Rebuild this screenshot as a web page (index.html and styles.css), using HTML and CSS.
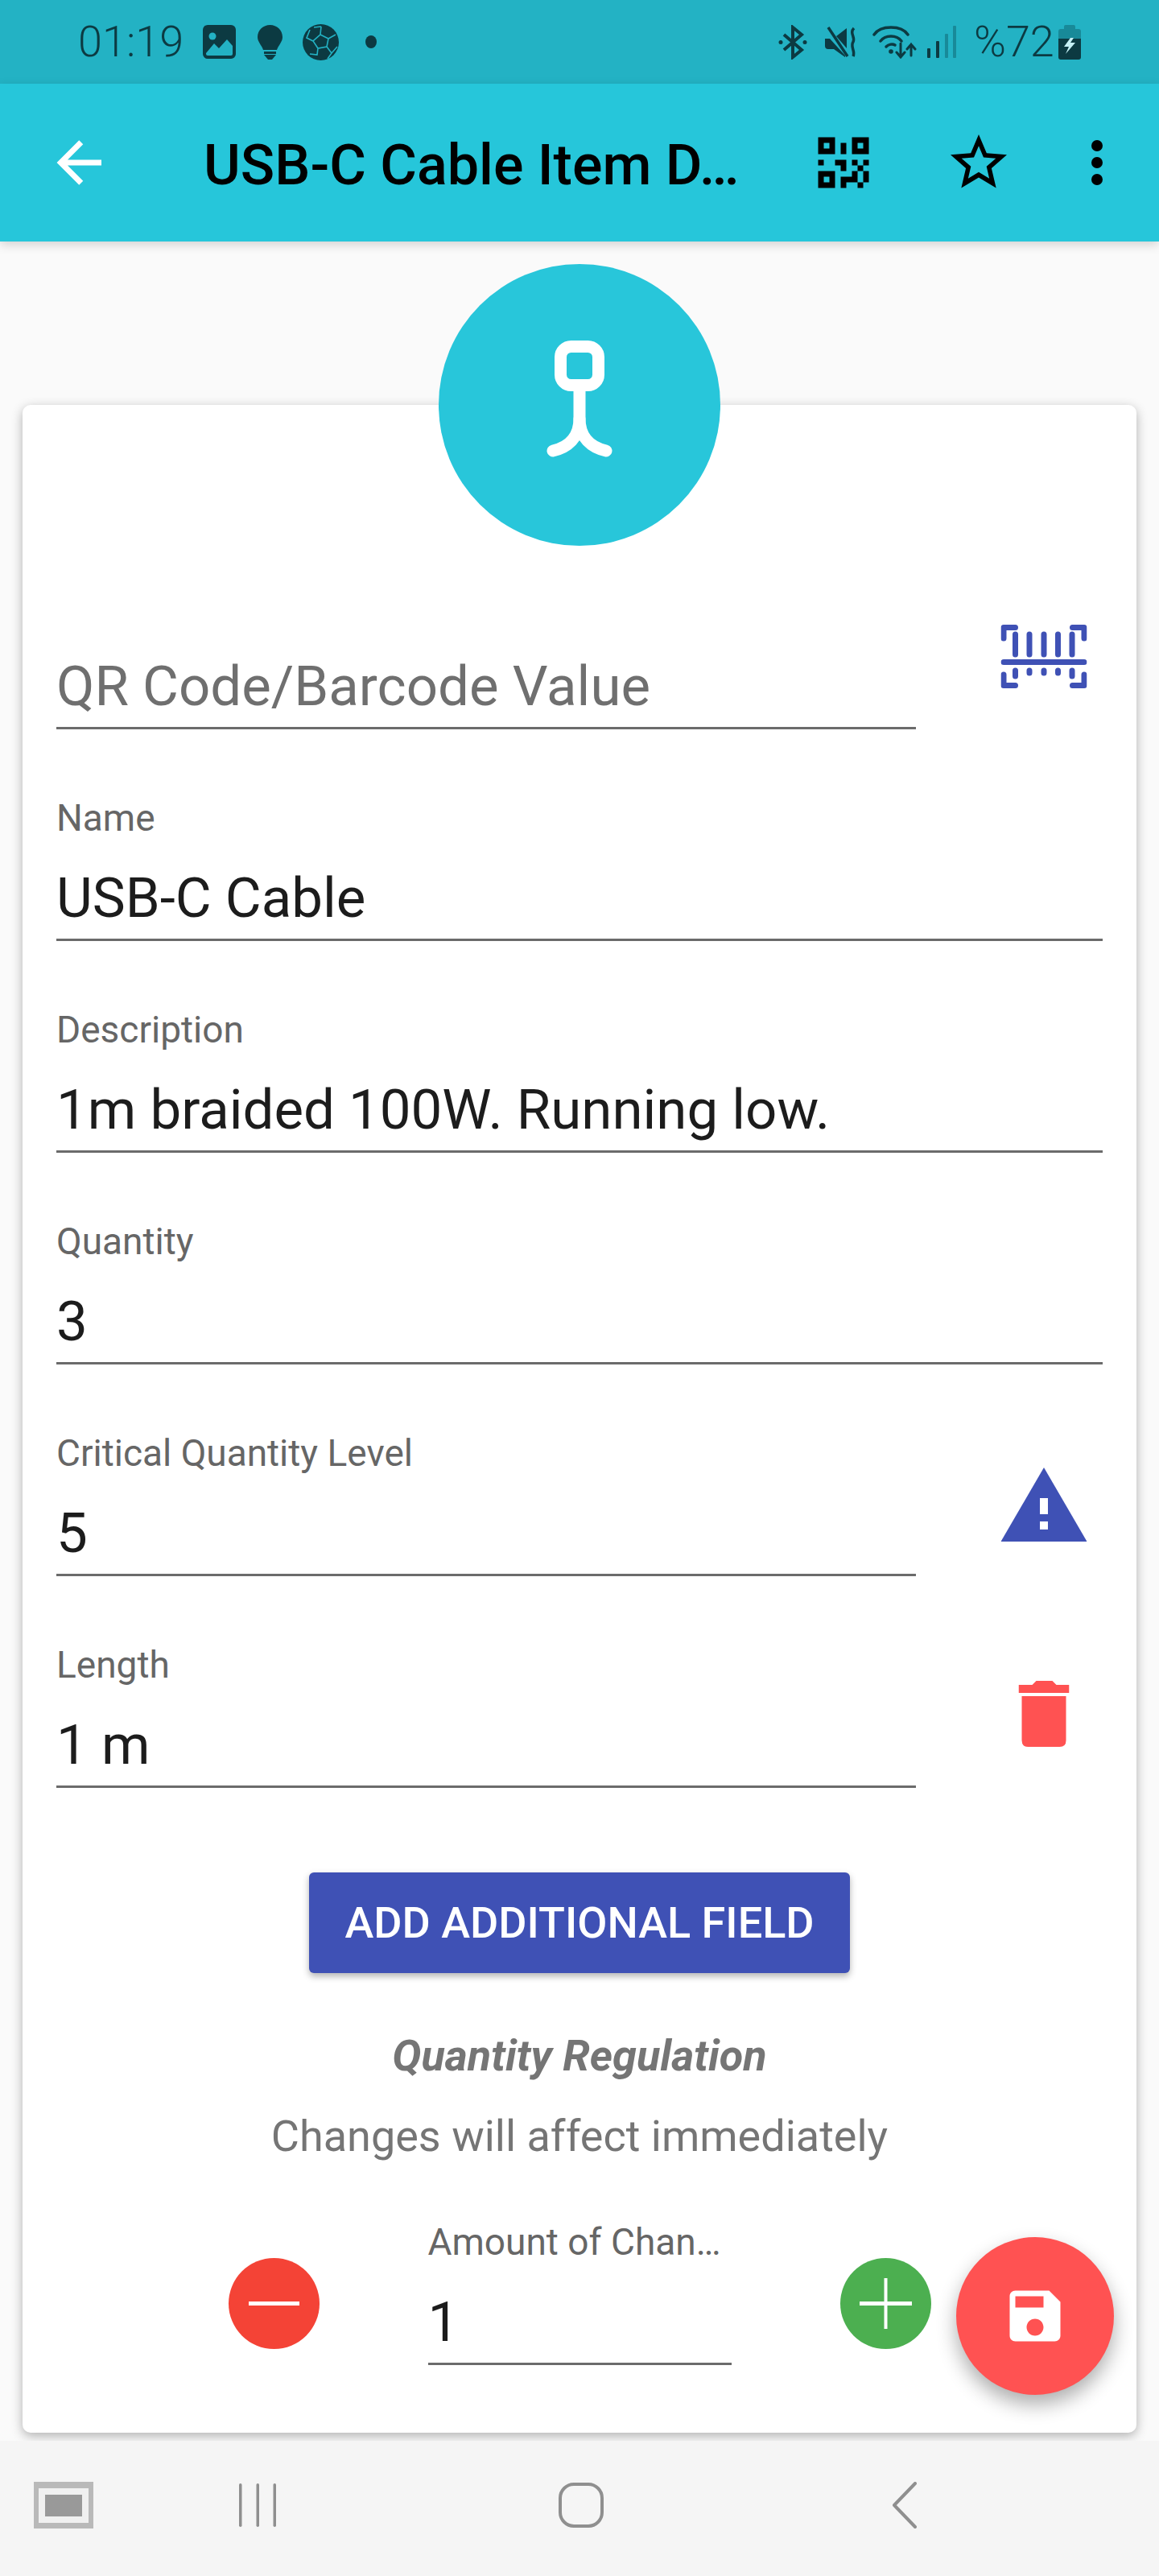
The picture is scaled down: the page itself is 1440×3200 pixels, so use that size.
FILE: index.html
```html
<!DOCTYPE html>
<html lang="en">

<head>
  <meta charset="UTF-8">
  <meta name="viewport" content="width=device-width, initial-scale=1.0">
  <title>USB-C Cable Item Details</title>
  <link rel="stylesheet" href="styles.css">
</head>

<body>

  <div class="status-bar">
    <div class="status-group">
      <span class="status-time">01:19</span>
      <svg class="st-image" width="41" height="42" viewBox="0 0 41 42">
        <rect width="41" height="42" rx="6" fill="#0c3a42" />
        <circle cx="12" cy="14" r="4.5" fill="#23b2c4" />
        <path d="M4 35 L14 23 L20 29 L30 18 L37 26 V36 Q37 38 35 38 H6 Q4 38 4 36Z" fill="#23b2c4" />
      </svg>
      <svg class="st-bulb" width="31" height="43" viewBox="0 0 31 43" fill="#0c3a42">
        <path d="M15.5 0C24 0 31 6.5 31 15C31 21 26 25 24 31H7C5 25 0 21 0 15C0 6.5 7 0 15.5 0Z" />
        <rect x="8" y="33" width="15" height="3" />
        <path d="M8 37H23L18 43H13Z" />
      </svg>
      <svg class="st-ball" width="45" height="45" viewBox="0 0 45 45">
        <circle cx="22.5" cy="22.5" r="22.5" fill="#0c3a42" />
        <path d="M22 13L32 18L30 28L19 30L13 21ZM22 13L23 3M32 18L41 13M30 28L36 36L31 43M19 30L18 38L9 37M13 21L5 17L9 7M23 3L14 4M36 36L43 28" fill="none" stroke="#23b2c4" stroke-width="1.6" />
      </svg>
      <span class="st-dot"></span>
    </div>
    <div class="status-group">
      <svg class="st-bt" width="36" height="43" viewBox="0 0 36 43" fill="none" stroke="#0c3a42" stroke-width="4">
        <path d="M7 12L29 31L18 40V3L29 12L7 31" />
        <circle cx="3" cy="21.5" r="2.5" fill="#0c3a42" stroke="none" />
        <circle cx="33" cy="21.5" r="2.5" fill="#0c3a42" stroke="none" />
      </svg>
      <svg class="st-mute" width="40" height="39" viewBox="0 0 40 39">
        <path d="M0 15H6L25 36V38L11 28H4Q0 28 0 24Z" fill="#0c3a42" />
        <path d="M14 12L27 2V27Z" fill="#0c3a42" />
        <path d="M4 1L28 37" stroke="#0c3a42" stroke-width="3.5" />
        <path d="M36 2C30 8 38 13 35 19C31 25 38 30 35 37" fill="none" stroke="#0c3a42" stroke-width="3.5" />
      </svg>
      <svg class="st-wifi" width="55" height="41" viewBox="0 0 55 41" fill="none" stroke="#0c3a42" stroke-width="3.5" stroke-linecap="round">
        <path d="M2 11C10 -1 36 -1 44 11" />
        <path d="M10 19C16 11 30 11 36 19" />
        <path d="M17 26C20 23 25 22 28 24" />
        <circle cx="23" cy="32" r="2.8" fill="#0c3a42" stroke="none" />
        <path d="M35 22V39M30 33L35 39L40 33" stroke-width="3" />
        <path d="M48 37V23M43 29L48 23L53 29" stroke-width="3" />
      </svg>
      <svg class="st-signal" width="36" height="40" viewBox="0 0 36 40">
        <rect x="0" y="28" width="4" height="12" rx="1" fill="#0c3a42" />
        <rect x="11" y="19" width="4" height="21" rx="1" fill="#0c3a42" />
        <rect x="22" y="10" width="4" height="30" rx="1" fill="#188a99" />
        <rect x="32" y="0" width="4" height="40" rx="1" fill="#188a99" />
      </svg>
      <span class="status-pct">%72</span>
      <svg class="st-batt" width="28" height="43" viewBox="0 0 28 43">
        <path d="M7 2Q7 0 9 0H19Q21 0 21 2V5H25Q28 5 28 8V17H0V8Q0 5 3 5H7Z" fill="#188a99" />
        <path d="M0 17H28V40Q28 43 25 43H3Q0 43 0 40Z" fill="#0c3a42" />
        <path d="M15 16L7 27H13L9 36L21 22H15L19 16Z" fill="#c5f0f5" />
      </svg>
    </div>
  </div>

  <div class="app-bar">
    <svg class="bar-icon back-icon" viewBox="0 0 24 24" fill="#fff">
      <path d="M20,11V13H8L13.5,18.5L12.08,19.92L4.16,12L12.08,4.08L13.5,5.5L8,11H20Z" />
    </svg>
    <div class="app-title">USB-C Cable Item D…</div>
    <svg class="bar-icon" viewBox="0 0 24 24">
      <path d="M3,11H5V13H3V11M11,5H13V9H11V5M9,11H13V15H11V13H9V11M15,11H17V13H19V11H21V13H19V15H21V19H19V21H17V19H13V21H11V17H15V15H17V13H15V11M19,19V15H17V19H19M15,3H21V9H15V3M17,5V7H19V5H17M3,3H9V9H3V3M5,5V7H7V5H5M3,15H9V21H3V15M5,17V19H7V17H5Z" />
    </svg>
    <svg class="bar-icon star-icon" viewBox="0 0 24 24">
      <path d="M12,15.39L8.24,17.66L9.23,13.38L5.91,10.5L10.29,10.13L12,6.09L13.71,10.13L18.09,10.5L14.77,13.38L15.76,17.66M22,9.24L14.81,8.63L12,2L9.19,8.63L2,9.24L7.45,13.97L5.82,21L12,17.27L18.18,21L16.54,13.97L22,9.24Z" />
    </svg>
    <svg class="bar-icon dots-icon" viewBox="0 0 24 24">
      <path d="M12,16A2,2 0 0,1 14,18A2,2 0 0,1 12,20A2,2 0 0,1 10,18A2,2 0 0,1 12,16M12,10A2,2 0 0,1 14,12A2,2 0 0,1 12,14A2,2 0 0,1 10,12A2,2 0 0,1 12,10M12,4A2,2 0 0,1 14,6A2,2 0 0,1 12,8A2,2 0 0,1 10,6A2,2 0 0,1 12,4Z" />
    </svg>
  </div>

  <div class="content">
    <div class="card">
      <div class="avatar">
        <svg width="350" height="350" viewBox="0 0 350 350" fill="none" stroke="#fff" stroke-width="15" stroke-linecap="round">
          <rect x="151.5" y="102.5" width="47" height="48" rx="13" />
          <path d="M175 158V192C175 216 160 228 142 232" />
          <path d="M175 192C175 216 190 228 208 232" />
        </svg>
      </div>

      <div class="row row-first">
        <div class="field">
          <div class="field-label"></div>
          <div class="field-value placeholder">QR Code/Barcode Value</div>
        </div>
        <div class="side side-barcode">
          <svg width="107" height="79" viewBox="0 0 107 79" fill="none" stroke="#3f51b5" stroke-width="7" stroke-linecap="round" stroke-linejoin="round">
            <path d="M3.5 17V3.5H18M89 3.5H103.5V17M3.5 62V75.5H18M89 75.5H103.5V62" />
            <path d="M18 12V37M35.500 12V37M53.500 12V37M71 12V37M88.500 12V37" />
            <path d="M3.500 46.500H103.500" />
            <path d="M18 57V64M35.500 57V60M53.500 57V60M71 57V60M88.500 57V64" />
          </svg>
        </div>
      </div>

      <div class="row">
        <div class="field">
          <div class="field-label">Name</div>
          <div class="field-value">USB-C Cable</div>
        </div>
      </div>

      <div class="row">
        <div class="field">
          <div class="field-label">Description</div>
          <div class="field-value">1m braided 100W. Running low.</div>
        </div>
      </div>

      <div class="row">
        <div class="field">
          <div class="field-label">Quantity</div>
          <div class="field-value">3</div>
        </div>
      </div>

      <div class="row">
        <div class="field">
          <div class="field-label">Critical Quantity Level</div>
          <div class="field-value">5</div>
        </div>
        <div class="side">
          <svg width="107" height="92" viewBox="0 0 107 92">
            <path d="M53.500 0L107 92H0Z" fill="#3f51b5" />
            <rect x="48.500" y="38" width="10" height="20" fill="#fff" />
            <rect x="48.500" y="67" width="10" height="10" fill="#fff" />
          </svg>
        </div>
      </div>

      <div class="row">
        <div class="field">
          <div class="field-label">Length</div>
          <div class="field-value">1 m</div>
        </div>
        <div class="side side-trash">
          <svg width="63" height="82" viewBox="0 0 63 82" fill="#ff5252">
            <path d="M0 5H17L22 0H42L47 5H63V15H0Z" />
            <path d="M4 19H59V74Q59 82 51 82H12Q4 82 4 74Z" />
          </svg>
        </div>
      </div>

      <div class="btn-wrap">
        <button class="add-btn">ADD ADDITIONAL FIELD</button>
      </div>

      <div class="reg-title">Quantity Regulation</div>
      <div class="reg-note">Changes will affect immediately</div>

      <div class="amount-row">
        <div class="round-btn minus">
          <svg width="113" height="113" viewBox="0 0 113 113">
            <rect x="25" y="54" width="63" height="5" fill="#fff" />
          </svg>
        </div>
        <div class="field amount-field">
          <div class="field-label">Amount of Chan…</div>
          <div class="field-value">1</div>
        </div>
        <div class="round-btn plus">
          <svg width="113" height="113" viewBox="0 0 113 113">
            <rect x="24" y="54" width="65" height="5" fill="#fff" />
            <rect x="54.500" y="25" width="4" height="63" fill="#fff" />
          </svg>
        </div>
      </div>

      <div class="fab">
        <svg width="84" height="84" viewBox="0 0 24 24" fill="#fff">
          <path d="M17 3H5c-1.11 0-2 .9-2 2v14c0 1.100.89 2 2 2h14c1.100 0 2-.9 2-2V7l-4-4zm-5 16c-1.660 0-3-1.340-3-3s1.340-3 3-3 3 1.340 3 3-1.340 3-3 3zm3-10H5V5h10v4z" />
        </svg>
      </div>
    </div>
  </div>

  <div class="nav-bar">
    <div class="nav-thumb">
      <div class="nav-thumb-inner"></div>
    </div>
    <svg class="nav-recent" width="46" height="54" viewBox="0 0 46 54" fill="#8f8f8f">
      <rect x="0" y="0" width="3.500" height="54" rx="1.700" />
      <rect x="21.500" y="0" width="3.500" height="54" rx="1.700" />
      <rect x="42.500" y="0" width="3.500" height="54" rx="1.700" />
    </svg>
    <svg class="nav-home" width="56" height="56" viewBox="0 0 56 56" fill="none" stroke="#8f8f8f" stroke-width="4">
      <rect x="2" y="2" width="52" height="52" rx="17" />
    </svg>
    <svg class="nav-back" width="30" height="58" viewBox="0 0 30 58" fill="none" stroke="#8f8f8f" stroke-width="4" stroke-linecap="round" stroke-linejoin="round">
      <path d="M28 2L2 29L28 56" />
    </svg>
  </div>

</body>

</html>
```

FILE: styles.css
```css
body {
  margin: 0;
  width: 1440px;
  height: 3200px;
  overflow: hidden;
  display: flex;
  flex-direction: column;
  background-color: #fafafa;
  font-family: Roboto, "Liberation Sans", sans-serif;
}

/* status bar */
.status-bar {
  height: 104px;
  flex: none;
  display: flex;
  justify-content: space-between;
  align-items: center;
  padding: 0 97px 0 97px;
  background-color: #23b2c4;
  color: #0c3a42;
}

.status-group {
  display: flex;
  align-items: center;
}

.status-time,
.status-pct {
  font-size: 54px;
  font-weight: 300;
  line-height: 56px;
}

.status-time {
  width: 130px;
}

.st-image {
  margin-left: 25px;
}

.st-bulb {
  margin-left: 27px;
}

.st-ball {
  margin-left: 25px;
}

.st-dot {
  width: 14px;
  height: 16px;
  margin-left: 33px;
  border-radius: 50%;
  background-color: #0c3a42;
}

.st-mute {
  margin-left: 22px;
}

.st-wifi {
  margin-left: 19px;
}

.st-signal {
  margin-left: 13px;
}

.status-pct {
  width: 97px;
  margin-left: 22px;
}

.st-batt {
  margin-left: 8px;
}

/* app bar */
.app-bar {
  position: relative;
  z-index: 2;
  height: 196px;
  flex: none;
  display: flex;
  align-items: center;
  padding: 0 35px 0 56px;
  background-color: #26c6da;
  box-shadow: 0 4px 12px rgba(0, 0, 0, 0.16);
}

.bar-icon {
  width: 84px;
  height: 84px;
  flex: none;
}

.app-title {
  width: 753px;
  margin-left: 113px;
  padding-top: 6px;
  font-size: 70px;
  font-weight: 500;
  white-space: nowrap;
  color: #000;
}

.star-icon {
  margin-left: 84px;
}

.dots-icon {
  margin-left: 63px;
}

/* main card */
.content {
  flex: 1;
  padding: 203px 28px 0;
}

.card {
  position: relative;
  display: flow-root;
  height: 2519px;
  box-sizing: border-box;
  padding: 0 42px;
  background-color: #fff;
  border-radius: 10px;
  box-shadow: 0 4px 14px rgba(0, 0, 0, 0.3);
}

.avatar {
  width: 350px;
  height: 350px;
  margin: -175px auto 0;
  border-radius: 50%;
  background-color: #28c6da;
}

.row {
  display: flex;
  align-items: flex-end;
  margin-top: 82px;
}

.row-first {
  margin-top: 47px;
}

.field {
  flex: 1;
  border-bottom: 3px solid #6b6b6b;
}

.field-label {
  height: 56px;
  font-size: 46px;
  line-height: 56px;
  color: #666;
}

.field-value {
  height: 76px;
  margin-top: 34px;
  padding-bottom: 12px;
  font-size: 69px;
  line-height: 76px;
  color: #1c1c1c;
}

.placeholder {
  color: #6f6f6f;
}

.side {
  width: 232px;
  height: 90px;
  margin-bottom: 44px;
  padding-left: 159px;
  box-sizing: border-box;
  display: flex;
  align-items: center;
  flex: none;
}

.side-barcode {
  margin-bottom: 46px;
}

.side-trash {
  margin-bottom: 47px;
}

.side svg {
  flex: none;
  transform: translateX(-50%);
}

.btn-wrap {
  display: flex;
  justify-content: center;
  margin-top: 105px;
}

.add-btn {
  width: 672px;
  height: 125px;
  border: none;
  border-radius: 6px;
  background-color: #3f51b5;
  color: #fff;
  font-family: Roboto, "Liberation Sans", sans-serif;
  font-size: 54px;
  font-weight: 500;
  box-shadow: 0 4px 8px rgba(0, 0, 0, 0.3);
}

.reg-title {
  margin-top: 70px;
  font-size: 54px;
  font-weight: 700;
  font-style: italic;
  line-height: 66px;
  text-align: center;
  color: #757575;
}

.reg-note {
  margin-top: 34px;
  font-size: 54px;
  line-height: 66px;
  text-align: center;
  color: #757575;
}

.amount-row {
  display: flex;
  justify-content: center;
  align-items: center;
  gap: 135px;
  margin-top: 70px;
}

.amount-field {
  flex: none;
  width: 377px;
}

.round-btn {
  width: 113px;
  height: 113px;
  flex: none;
  margin-top: 28px;
  border-radius: 50%;
}

.minus {
  background-color: #f44336;
}

.plus {
  background-color: #4caf50;
}

.fab {
  position: absolute;
  right: 28px;
  bottom: 47px;
  width: 196px;
  height: 196px;
  display: flex;
  align-items: center;
  justify-content: center;
  border-radius: 50%;
  background-color: #ff5252;
  box-shadow: 0 12px 24px rgba(0, 0, 0, 0.32);
}

/* bottom nav */
.nav-bar {
  position: relative;
  z-index: 2;
  height: 168px;
  flex: none;
  box-sizing: border-box;
  display: flex;
  align-items: center;
  padding: 0 0 8px 42px;
  background-color: #f5f5f5;
}

.nav-thumb {
  width: 74px;
  height: 58px;
  box-sizing: border-box;
  display: flex;
  align-items: center;
  justify-content: center;
  background-color: #b9b9b9;
}

.nav-thumb-inner {
  width: 46px;
  height: 27px;
  border: 8px solid #f0f0f0;
  background-color: #999;
}

.nav-recent {
  margin-left: 181px;
}

.nav-home {
  margin-left: 351px;
}

.nav-back {
  margin-left: 359px;
}
```
